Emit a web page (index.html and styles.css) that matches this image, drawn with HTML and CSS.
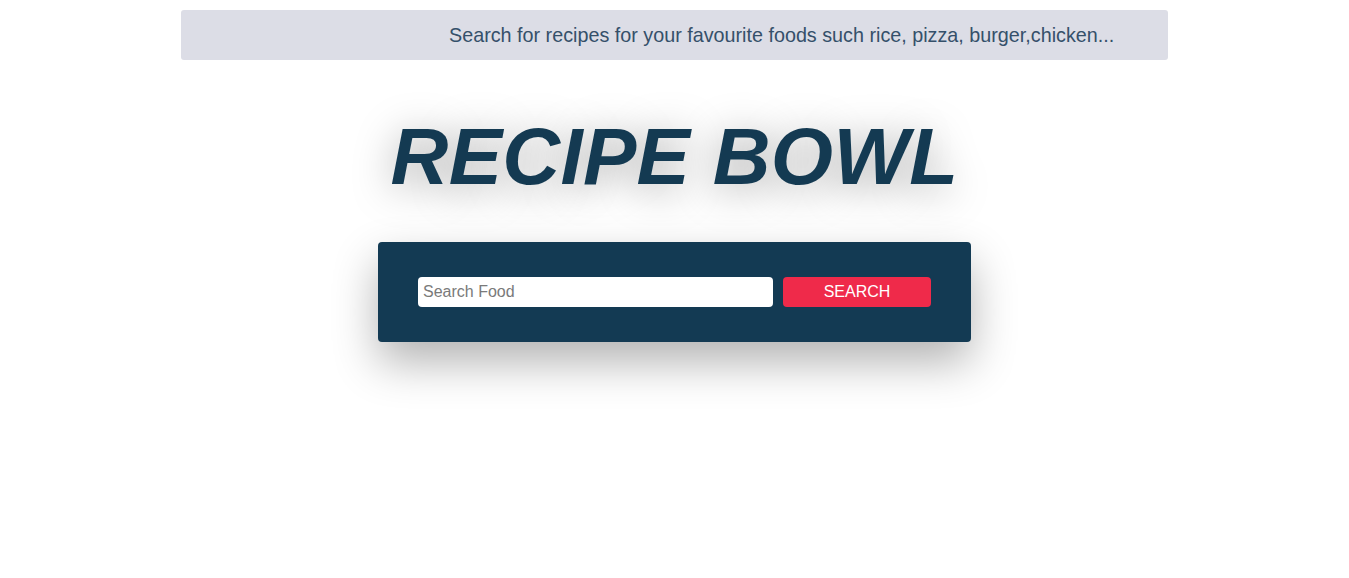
FILE: index.html
```html
<!DOCTYPE html>
<html>
<head>
<meta charset="utf-8">
<link rel="stylesheet" href="styles.css">
</head>
<body>
<div class="topbar"><span class="ticker">Search for recipes for your favourite foods such rice, pizza, burger,chicken...</span></div>
<h1 class="title">RECIPE BOWL</h1>
<div class="search-box">
  <input class="search-input" type="text" placeholder="Search Food">
  <button class="search-btn">SEARCH</button>
</div>
</body>
</html>
```
FILE: styles.css
```css
html, body {
  margin: 0;
  padding: 0;
  background: #ffffff;
  font-family: "Liberation Sans", Arial, sans-serif;
}
body {
  display: flex;
  flex-direction: column;
  align-items: center;
  padding-top: 10px;
  min-height: 100vh;
  box-sizing: border-box;
}
.topbar {
  width: 987px;
  height: 50px;
  background: #dcdde6;
  border-radius: 3px;
  display: flex;
  align-items: center;
  padding-left: 268px;
  box-sizing: border-box;
  overflow: hidden;
  white-space: nowrap;
}
.ticker {
  font-size: 19.75px;
  color: #35506a;
}
.title {
  margin: 51px 0 0 0;
  font-size: 80px;
  font-weight: bold;
  font-style: italic;
  color: #143a52;
  line-height: 92px;
  letter-spacing: 0.3px;
  text-shadow: 0 6px 40px rgba(0, 0, 0, 0.35);
}
.search-box {
  margin-top: 39px;
  width: 593px;
  height: 100px;
  background: #133a53;
  border-radius: 4px;
  box-sizing: border-box;
  padding: 35px 40px;
  display: flex;
  gap: 10px;
  box-shadow: 0 20px 45px rgba(0, 0, 0, 0.3);
}
.search-input {
  width: 355px;
  height: 30px;
  box-sizing: border-box;
  border: none;
  border-radius: 4px;
  padding: 0 5px;
  font-family: "Liberation Sans", Arial, sans-serif;
  font-size: 16px;
  background: #ffffff;
  outline: none;
}
.search-input::placeholder {
  color: #7a7a7a;
}
.search-btn {
  width: 148px;
  height: 30px;
  border: none;
  border-radius: 4px;
  background: #ef2a4a;
  color: #ffffff;
  font-family: "Liberation Sans", Arial, sans-serif;
  font-size: 16px;
  padding: 0;
}
```
